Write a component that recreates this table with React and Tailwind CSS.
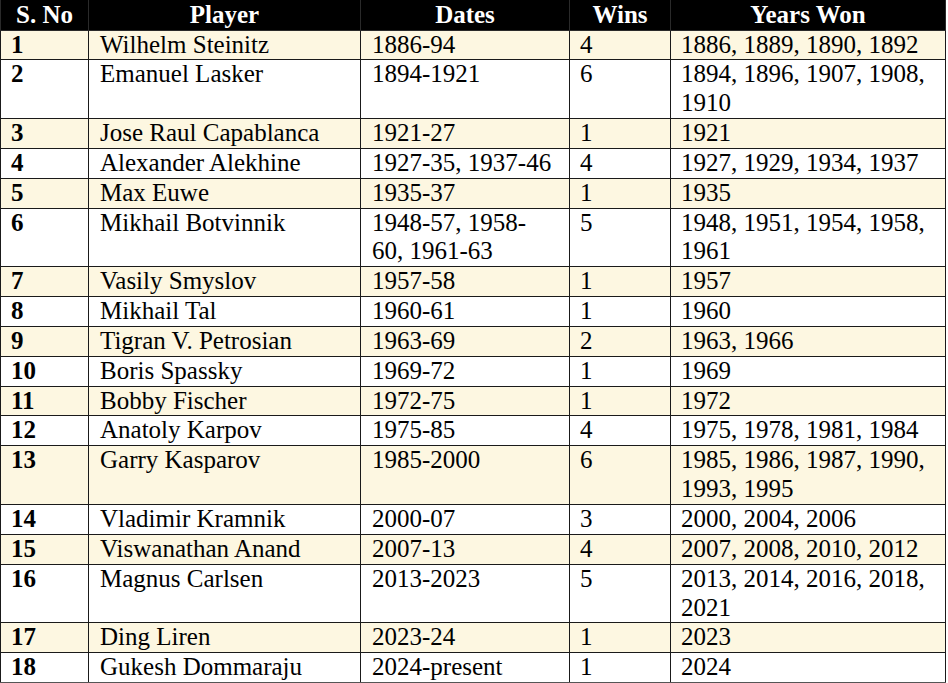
import React from "react";

const rows = [
  ["1", "Wilhelm Steinitz", "1886-94", "4", "1886, 1889, 1890, 1892"],
  ["2", "Emanuel Lasker", "1894-1921", "6", ["1894, 1896, 1907, 1908,", "1910"]],
  ["3", "Jose Raul Capablanca", "1921-27", "1", "1921"],
  ["4", "Alexander Alekhine", "1927-35, 1937-46", "4", "1927, 1929, 1934, 1937"],
  ["5", "Max Euwe", "1935-37", "1", "1935"],
  ["6", "Mikhail Botvinnik", ["1948-57, 1958-", "60, 1961-63"], "5", ["1948, 1951, 1954, 1958,", "1961"]],
  ["7", "Vasily Smyslov", "1957-58", "1", "1957"],
  ["8", "Mikhail Tal", "1960-61", "1", "1960"],
  ["9", "Tigran V. Petrosian", "1963-69", "2", "1963, 1966"],
  ["10", "Boris Spassky", "1969-72", "1", "1969"],
  ["11", "Bobby Fischer", "1972-75", "1", "1972"],
  ["12", "Anatoly Karpov", "1975-85", "4", "1975, 1978, 1981, 1984"],
  ["13", "Garry Kasparov", "1985-2000", "6", ["1985, 1986, 1987, 1990,", "1993, 1995"]],
  ["14", "Vladimir Kramnik", "2000-07", "3", "2000, 2004, 2006"],
  ["15", "Viswanathan Anand", "2007-13", "4", "2007, 2008, 2010, 2012"],
  ["16", "Magnus Carlsen", "2013-2023", "5", ["2013, 2014, 2016, 2018,", "2021"]],
  ["17", "Ding Liren", "2023-24", "1", "2023"],
  ["18", "Gukesh Dommaraju", "2024-present", "1", "2024"],
];

function Cell({ v, className }) {
  const content = Array.isArray(v) ? (
    <>
      {v[0]}
      <br />
      {v[1]}
    </>
  ) : (
    v
  );
  return (
    <td
      className={
        "border border-[#1a1a1a] align-top whitespace-nowrap py-0 leading-[28.85px] " +
        className
      }
    >
      {content}
    </td>
  );
}

export default function App() {
  return (
    <div
      className="w-[948px] h-[683px] bg-white overflow-hidden text-black"
      style={{ fontFamily: '"Liberation Serif", "Times New Roman", serif' }}
    >
      <table className="table-fixed border-collapse w-[945px] text-[25px] border-b-2 border-b-[#555]">
        <colgroup>
          <col className="w-[88px]" />
          <col className="w-[272px]" />
          <col className="w-[209px]" />
          <col className="w-[101px]" />
          <col className="w-[275px]" />
        </colgroup>
        <thead>
          <tr className="bg-black text-white font-bold h-[30px]">
            <th className="border border-[#2a2a2a] border-t-0 leading-[29px] py-0 text-center">S. No</th>
            <th className="border border-[#2a2a2a] border-t-0 leading-[29px] py-0 text-center">Player</th>
            <th className="border border-[#2a2a2a] border-t-0 leading-[29px] py-0 text-center">Dates</th>
            <th className="border border-[#2a2a2a] border-t-0 leading-[29px] py-0 text-center">Wins</th>
            <th className="border border-[#2a2a2a] border-t-0 leading-[29px] py-0 text-center">Years Won</th>
          </tr>
        </thead>
        <tbody>
          {rows.map((r, i) => (
            <tr key={r[0]} className={i % 2 === 0 ? "bg-[#fdf7e1]" : "bg-white"}>
              <Cell v={r[0]} className="font-bold pl-[10px] pr-1" />
              <Cell v={r[1]} className="pl-[11px] pr-2" />
              <Cell v={r[2]} className="pl-[11px] pr-2" />
              <Cell v={r[3]} className="pl-[10px] pr-2" />
              <Cell v={r[4]} className="pl-[10px] pr-2" />
            </tr>
          ))}
        </tbody>
      </table>
    </div>
  );
}
